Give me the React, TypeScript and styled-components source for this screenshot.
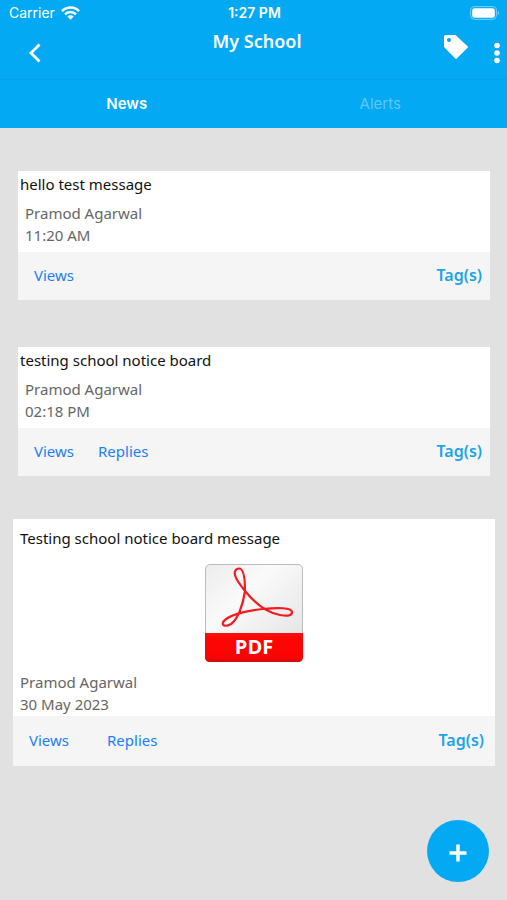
import React from "react";
import styled, { createGlobalStyle } from "styled-components";

const blue = "#04a9f4";
const textFont = '"Noto Sans", "Open Sans", sans-serif';
const systemFont = 'Inter, Roboto, sans-serif';

const GlobalStyle = createGlobalStyle`
  * { box-sizing: border-box; }
  body { margin: 0; background: #e1e1e1; font-family: ${textFont}; }
  button { margin: 0; padding: 0; border: 0; background: none; font: inherit; color: inherit; cursor: pointer; }
  h1, h2, p { margin: 0; }
  svg { display: block; }
`;

const Screen = styled.div`
  min-height: 100vh;
  display: flex;
  flex-direction: column;
`;

const Header = styled.header`
  background: ${blue};
  color: #fff;
`;

const StatusBar = styled.div`
  display: grid;
  grid-template-columns: 1fr auto 1fr;
  align-items: center;
  height: 26px;
  padding: 0 7px 0 9px;
  font: 400 14px/26px ${systemFont};
`;

const Carrier = styled.span`
  display: flex;
  align-items: center;
  gap: 6px;
`;

const Clock = styled.span`
  font-weight: 600;
`;

const Battery = styled.span`
  justify-self: end;
`;

const NavBar = styled.div`
  display: grid;
  grid-template-columns: 1fr auto 1fr;
  height: 54px;
  padding: 0 6px 0 13px;
  border-bottom: 1px solid #059fe6;
`;

const BackButton = styled.button`
  justify-self: start;
  padding: 0 10px;
`;

const Title = styled.h1`
  padding-top: 3px;
  font-size: 18px;
  line-height: 24px;
  font-weight: 600;
`;

const Actions = styled.div`
  justify-self: end;
  display: flex;
  align-items: center;
  gap: 24px;
`;

const TagButton = styled.button`
  align-self: flex-start;
  padding-top: 8px;
`;

const Tabs = styled.div`
  display: grid;
  grid-template-columns: 1fr 1fr;
  height: 48px;
`;

const Tab = styled.button<{ $active?: boolean }>`
  font: ${(p) => (p.$active ? 600 : 400)} 15px/20px ${systemFont};
  color: ${(p) => (p.$active ? "#fff" : "#5fc8f8")};
`;

const Feed = styled.main`
  display: flex;
  flex-direction: column;
  padding-top: 43px;
  padding-bottom: 100px;
`;

const Card = styled.article<{ $wide?: boolean }>`
  margin: ${(p) => (p.$wide ? "-4px 12px 0 13px" : "0 17px 47px 18px")};
  background: #fff;
`;

const CardBody = styled.div<{ $wide?: boolean }>`
  padding: ${(p) => (p.$wide ? "7px 7px 1px" : "1px 2px 4px")};
`;

const Message = styled.h2`
  font-size: 15px;
  line-height: 24px;
  font-weight: 400;
  color: #111;
`;

const Attachment = styled.button`
  display: block;
  margin: 14px auto 9px;
`;

const Meta = styled.p<{ $inset?: boolean }>`
  padding: ${(p) => (p.$inset ? "6px 5px 2px" : "0")};
  font-size: 15px;
  line-height: 22px;
  color: #666;
`;

const CardFooter = styled.footer<{ $wide?: boolean }>`
  display: flex;
  align-items: center;
  gap: ${(p) => (p.$wide ? 38 : 24)}px;
  height: ${(p) => (p.$wide ? 50 : 48)}px;
  padding: 0 ${(p) => (p.$wide ? "11px 2px 16px" : "8px 2px 16px")};
  background: #f5f5f5;
`;

const Action = styled.button`
  font-size: 15px;
  line-height: 22px;
  color: #1b80f5;
`;

const TagsAction = styled(Action)`
  margin-left: auto;
  font-size: 16px;
  font-weight: 600;
  color: #1ba4e9;
`;

const AddButton = styled.button`
  position: fixed;
  right: 18px;
  bottom: 18px;
  display: grid;
  place-items: center;
  width: 62px;
  height: 62px;
  padding-top: 4px;
  border-radius: 50%;
  background: ${blue};
`;

const WifiIcon = () => (
  <svg width="19" height="14" viewBox="0 0 19 14" aria-hidden="true">
    <g fill="none" stroke="#fff" strokeWidth="2.500">
      <path d="M1 5.1C5.7.4 13.3.4 18 5.1" />
      <path d="M4 8.3c3-3 8-3 11 0" />
    </g>
    <path d="M6.3 10.4c1.8-1.7 4.6-1.7 6.4 0L9.5 13.7z" fill="#fff" />
  </svg>
);

const BatteryIcon = () => (
  <svg width="30" height="14" viewBox="0 0 30 14" aria-hidden="true">
    <rect x=".6" y=".6" width="25.8" height="12.8" rx="4" fill="none" stroke="#7dd0f8" />
    <rect x="2.2" y="2.2" width="22.6" height="9.6" rx="2.4" fill="#fff" />
    <path d="M27.8 5c1.8.6 1.8 3.4 0 4z" fill="#7dd0f8" />
  </svg>
);

const PdfIcon = () => (
  <svg width="98" height="98" viewBox="0 0 98 98" role="img" aria-label="PDF">
    <defs>
      <linearGradient id="paper" x1="0" y1="0" x2="1" y2="1">
        <stop offset="0" stopColor="#ececec" />
        <stop offset=".35" stopColor="#fafafa" />
        <stop offset="1" stopColor="#e0e0e0" />
      </linearGradient>
      <linearGradient id="band" x1="0" y1="0" x2="0" y2="1">
        <stop offset="0" stopColor="#f51212" />
        <stop offset=".2" stopColor="#ff0505" />
        <stop offset=".85" stopColor="#f80404" />
        <stop offset="1" stopColor="#cf0d0d" />
      </linearGradient>
    </defs>
    <rect x=".5" y=".5" width="97" height="97" rx="4.5" fill="url(#paper)" stroke="#bcbcbc" />
    <path d="M0 69h98v24.500a4.500 4.500 0 0 1-4.500 4.500h-89A4.500 4.500 0 0 1 0 93.500z" fill="url(#band)" />
    <path
      d="M34 4.500C39 4.500 40 15 40 27C38 41 33 55 26 60C20 63.500 16 61 18.500 57.500C23 51 42 46.500 58 45C72 43.500 87 43.500 87 48C87 52.500 81 52 75 51C61 48.500 49 38 40 27C33 18 28.500 12 30 7.500C30.700 5.500 32 4.500 34 4.500Z"
      fill="none" stroke="#f21b20" strokeWidth="2.200" strokeLinejoin="round"
    />
    <text x="49" y="90" textAnchor="middle" fontFamily="Open Sans, Noto Sans, sans-serif" fontSize="20" fontWeight="700" fill="#fff">PDF</text>
  </svg>
);

type Post = { message: string; author: string; time: string; replies?: boolean; pdf?: boolean };

const posts: Post[] = [
  { message: "hello test message", author: "Pramod Agarwal", time: "11:20 AM" },
  { message: "testing school notice board", author: "Pramod Agarwal", time: "02:18 PM", replies: true },
  { message: "Testing school notice board message", author: "Pramod Agarwal", time: "30 May 2023", replies: true, pdf: true },
];

const PostCard = ({ message, author, time, replies, pdf }: Post) => (
  <Card $wide={pdf}>
    <CardBody $wide={pdf}>
      <Message>{message}</Message>
      {pdf && (
        <Attachment type="button" aria-label="Open PDF">
          <PdfIcon />
        </Attachment>
      )}
      <Meta $inset={!pdf}>
        {author}
        <br />
        {time}
      </Meta>
    </CardBody>
    <CardFooter $wide={pdf}>
      <Action type="button">Views</Action>
      {replies && <Action type="button">Replies</Action>}
      <TagsAction type="button">Tag(s)</TagsAction>
    </CardFooter>
  </Card>
);

export default function App() {
  return (
    <Screen>
      <GlobalStyle />
      <Header>
        <StatusBar>
          <Carrier>
            Carrier
            <WifiIcon />
          </Carrier>
          <Clock>1:27 PM</Clock>
          <Battery>
            <BatteryIcon />
          </Battery>
        </StatusBar>
        <NavBar>
          <BackButton type="button" aria-label="Back">
            <svg width="24" height="24" viewBox="0 0 24 24" fill="none" stroke="#fff" strokeWidth="2.800">
              <path d="M16.500 3.500 8 12l8.500 8.500" />
            </svg>
          </BackButton>
          <Title>My School</Title>
          <Actions>
            <TagButton type="button" aria-label="Tags">
              <svg width="26" height="26" viewBox="0 0 26 26">
                <path
                  fill="#fff" fillRule="evenodd"
                  d="M2.500 1H12.500L25.300 13 13 25.300 1 13V2.500Q1 1 2.500 1ZM6 4a2 2 0 1 0 .01 0Z"
                />
              </svg>
            </TagButton>
            <button type="button" aria-label="More options">
              <svg width="8" height="22" viewBox="0 0 8 22" fill="#fff">
                <circle cx="4" cy="3.500" r="2.800" />
                <circle cx="4" cy="11" r="2.800" />
                <circle cx="4" cy="18.500" r="2.800" />
              </svg>
            </button>
          </Actions>
        </NavBar>
        <Tabs role="tablist">
          <Tab type="button" role="tab" aria-selected="true" $active>News</Tab>
          <Tab type="button" role="tab" aria-selected="false">Alerts</Tab>
        </Tabs>
      </Header>
      <Feed>
        {posts.map((post) => (
          <PostCard key={post.message} {...post} />
        ))}
      </Feed>
      <AddButton type="button" aria-label="Add post">
        <svg width="18" height="18" viewBox="0 0 18 18" stroke="#fff" strokeWidth="3.500">
          <path d="M9 .5v17M.5 9h17" />
        </svg>
      </AddButton>
    </Screen>
  );
}
